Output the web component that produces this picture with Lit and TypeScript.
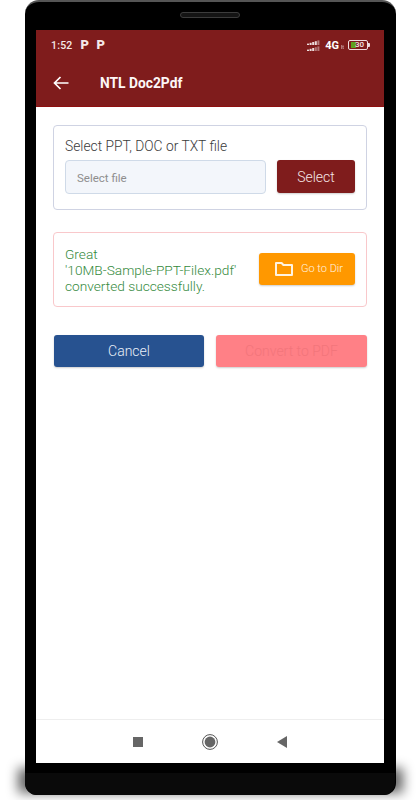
import { LitElement, html, css, svg } from 'lit';
import { customElement } from 'lit/decorators.js';

// two rows of rising signal bars, the top row brighter than the bottom one
const signalBars = [0, 1, 2, 3, 4].flatMap((i) => {
  const x = i * 2.6;
  const h = 1.4 + i * 0.8;
  return [
    svg`<rect x=${x} y=${5 - h} width="2" height=${h} fill="#fff" opacity=${i > 3 ? 0.45 : 0.85}></rect>`,
    svg`<rect x=${x} y=${11 - h} width="2" height=${h} fill="#fff" opacity=${i > 2 ? 0.4 : 0.85}></rect>`,
  ];
});

@customElement('app-root')
export class AppRoot extends LitElement {
  static styles = css`
    :host {
      display: block;
      height: 800px;
      overflow: hidden;
      background: #fff;
      isolation: isolate;
      font-family: Roboto, "Liberation Sans", sans-serif;
    }

    .phone {
      position: relative;
      width: 371px;
      height: 795px;
      margin-left: 25px;
      display: flex;
      flex-direction: column;
      box-sizing: border-box;
      padding: 0 12px 0 11px;
      background: #000;
      border-top: 2px solid #555;
      border-radius: 14px 14px 12px 12px;
    }
    .shadow {
      position: absolute;
      left: -7px;
      right: -7px;
      top: 766px;
      height: 25px;
      background: rgba(0, 0, 0, .6);
      filter: blur(6px);
      z-index: -1;
    }

    .bezel-top {
      flex: 0 0 28px;
      display: flex;
      justify-content: center;
      align-items: flex-start;
      padding-top: 10px;
      box-sizing: border-box;
    }
    .speaker {
      width: 58px;
      height: 4px;
      border: 1px solid #3c3c3c;
      border-radius: 3px;
      background: #141414;
    }

    .screen {
      flex: 0 0 733px;
      display: flex;
      flex-direction: column;
      background: #fff;
      overflow: hidden;
    }

    .appbar {
      flex: 0 0 77px;
      box-sizing: border-box;
      background: #7f1c1c;
      border-bottom: 1px solid #8f0f0f;
      color: #fff;
      display: flex;
      flex-direction: column;
    }
    .status {
      flex: 0 0 30px;
      display: flex;
      align-items: center;
      padding: 0 16px 0 15px;
      font-size: 10.5px;
      font-weight: 500;
      color: #f4e8e8;
    }
    .status .time { margin-right: 8px; letter-spacing: .2px; }
    .status .park {
      font-size: 13px;
      font-weight: 900;
      width: 16px;
      line-height: 12px;
    }
    .status .right {
      margin-left: auto;
      display: flex;
      align-items: center;
    }
    .status .net { font-size: 11px; font-weight: 700; margin-left: 4px; color: #fff; }
    .status .lte { font-size: 5px; margin: 3px 4px 0 2px; opacity: .7; }
    .battery {
      position: relative;
      box-sizing: border-box;
      width: 20px;
      height: 10px;
      border: 1px solid #f0dcdc;
      border-radius: 2px;
      display: flex;
      align-items: center;
      padding-left: 2px;
      font-size: 8px;
      line-height: 8px;
      color: #f6eaea;
    }
    .battery i {
      width: 5px;
      height: 6px;
      background: #5fa01e;
      margin-right: -1px;
      flex: none;
    }
    .battery::after {
      content: "";
      position: absolute;
      right: -3px;
      top: 2px;
      width: 2px;
      height: 4px;
      background: #f0dcdc;
      border-radius: 0 1px 1px 0;
    }

    .toolbar {
      flex: 1;
      display: flex;
      align-items: center;
      padding: 0 0 0 17px;
    }
    .toolbar svg { display: block; flex: none; }
    .toolbar h1 {
      margin: 0 0 0 31px;
      font-size: 13.8px;
      font-weight: 700;
      line-height: 20px;
      color: #fdf7f7;
    }

    .content {
      flex: 1;
      padding: 18px 17px 0;
      display: flex;
      flex-direction: column;
    }

    .card {
      box-sizing: border-box;
      border-radius: 4px;
      background: #fff;
      padding: 0 11px;
    }
    .pick {
      height: 85px;
      border: 1px solid #cfd3e3;
      padding-top: 12px;
    }
    .pick label {
      display: block;
      font-size: 13.8px;
      font-weight: 300;
      line-height: 16px;
      color: #3a3a3a;
    }
    .pick .row {
      margin-top: 6px;
      display: flex;
      gap: 11px;
    }
    .input {
      flex: 1;
      box-sizing: border-box;
      height: 34px;
      display: flex;
      align-items: center;
      padding: 1px 0 0 11px;
      background: #f3f6fb;
      border: 1px solid #cfdae8;
      border-radius: 4px;
      font-size: 11.5px;
      color: #8e8e8e;
    }
    .btn {
      box-sizing: border-box;
      display: flex;
      align-items: center;
      justify-content: center;
      border-radius: 3px;
      font-size: 14px;
      font-weight: 300;
      color: #fff;
      box-shadow: 0 1px 2px rgba(0, 0, 0, .2);
    }
    .select {
      flex: 0 0 78px;
      height: 33px;
      background: #7f1c1c;
      color: #f5e6e6;
    }

    .result {
      margin-top: 22px;
      height: 75px;
      border: 1px solid #f9c8cb;
      display: flex;
      align-items: center;
      justify-content: space-between;
    }
    .result p {
      margin: 0;
      font-size: 13.7px;
      font-weight: 300;
      line-height: 16px;
      color: #358a3d;
      white-space: nowrap;
    }
    .dir {
      flex: 0 0 96px;
      height: 32px;
      margin-bottom: 2px;
      gap: 8px;
      justify-content: flex-start;
      padding-left: 16px;
      background: #ff9800;
      font-size: 11px;
      font-weight: 300;
      color: #fff4e0;
    }
    .dir svg { display: block; }

    .actions {
      margin-top: 28px;
      padding-left: 1px;
      display: flex;
      gap: 12px;
    }
    .actions .btn { height: 32px; }
    .cancel { flex: 0 0 150px; background: #275290; color: #e9eff8; }
    .convert { flex: 1; background: #ff8086; color: #f2757b; }

    .nav {
      flex: 0 0 43px;
      border-top: 1px solid #eeeeee;
      display: flex;
      align-items: center;
      justify-content: center;
      gap: 59px;
      padding-right: 1px;
    }
    .nav svg { display: block; }

    .chin {
      flex: 1;
      display: flex;
      flex-direction: column;
      justify-content: flex-end;
      margin: 0 -11px;
      border-radius: 0 0 12px 12px;
      overflow: hidden;
    }
    .chin div { height: 22px; background: #0a0a0a; }
  `;

  render() {
    return html`
      <div class="phone">
        <div class="shadow"></div>
        <div class="bezel-top"><div class="speaker"></div></div>
        <div class="screen">
          <header class="appbar">
            <div class="status">
              <span class="time">1:52</span>
              <span class="park">P</span>
              <span class="park">P</span>
              <div class="right">
                <svg width="14" height="11" viewBox="0 0 14 11">${signalBars}</svg>
                <span class="net">4G</span>
                <span class="lte">lt</span>
                <div class="battery"><i></i>30</div>
              </div>
            </div>
            <div class="toolbar">
              <svg width="16" height="16" viewBox="0 0 16 16" fill="none" stroke="#fff" stroke-width="1.7">
                <path d="M15.5 8H1.5M7.5 2 1.5 8l6 6"></path>
              </svg>
              <h1>NTL Doc2Pdf</h1>
            </div>
          </header>

          <main class="content">
            <section class="card pick">
              <label>Select PPT, DOC or TXT file</label>
              <div class="row">
                <div class="input">Select file</div>
                <div class="btn select">Select</div>
              </div>
            </section>

            <section class="card result">
              <p>Great<br />'10MB-Sample-PPT-Filex.pdf'<br />converted successfully.</p>
              <div class="btn dir">
                <svg width="18" height="16" viewBox="0 0 18 16" fill="none" stroke="#fff3e0" stroke-width="2">
                  <path d="M1 2h5.6l1.8 2h8.6v10H1z" stroke-linejoin="round"></path>
                </svg>
                <span>Go to Dir</span>
              </div>
            </section>

            <div class="actions">
              <div class="btn cancel">Cancel</div>
              <div class="btn convert">Convert to PDF</div>
            </div>
          </main>

          <nav class="nav">
            <svg width="10" height="10" viewBox="0 0 10 10"><rect width="10" height="10" fill="#666"></rect></svg>
            <svg width="16" height="16" viewBox="0 0 16 16">
              <circle cx="8" cy="8" r="7.4" fill="none" stroke="#555" stroke-width="1"></circle>
              <circle cx="8" cy="8" r="5.4" fill="#666"></circle>
            </svg>
            <svg width="10" height="12" viewBox="0 0 10 12"><path d="M0 6 10 0v12z" fill="#666"></path></svg>
          </nav>
        </div>
        <div class="chin"><div></div></div>
      </div>
    `;
  }
}
